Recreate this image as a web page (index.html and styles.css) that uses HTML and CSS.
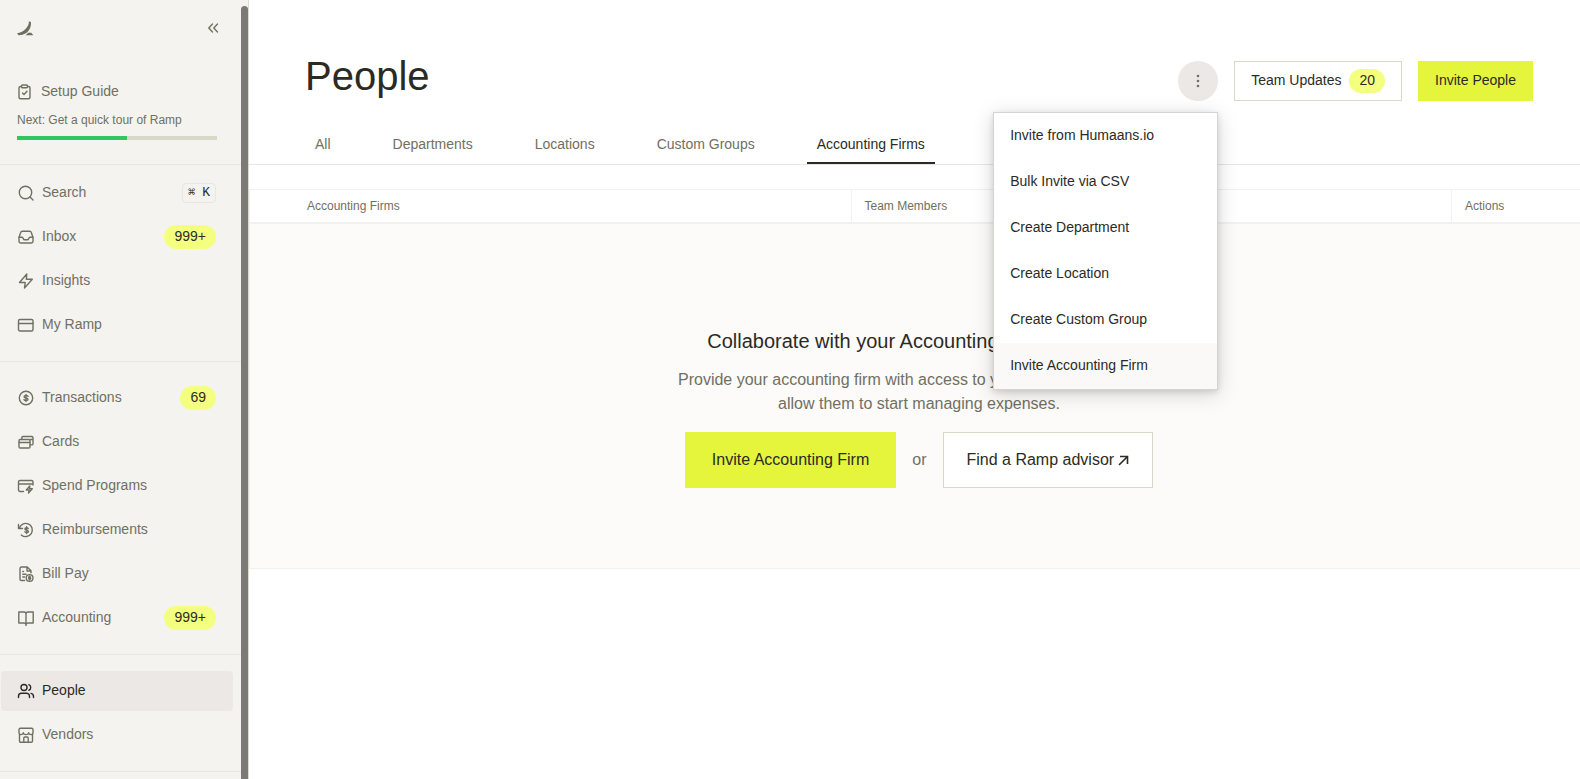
FILE: index.html
```html
<!DOCTYPE html>
<html lang="en">
<head>
<meta charset="utf-8">
<title>People</title>
<link rel="stylesheet" href="styles.css">
</head>
<body>
<div class="app">
  <aside class="sidebar">
    <div class="sidebar-content">
      <div class="brand">
        <a class="logo" href="#" aria-label="Home">
          <svg width="17" height="15" viewBox="0 0 17 15" fill="currentColor"><path d="M11.900.3L13.900.9C14.600 6 11.800 11 7.300 13.100 5 14.200 2.800 14.400 1.600 14.200L0 12.200C3 12 6 10.500 8.500 8 11 5.500 12 3 11.900.3z"/><path d="M7.800 14.300C9.300 13.800 10.400 12.900 11 11.700h3.300l2 2.600z"/></svg>
        </a>
        <button class="collapse" type="button" aria-label="Collapse sidebar">
          <svg width="12" height="12" viewBox="0 0 12 12" class="line"><path d="M5.500 2L1.800 6l3.700 4M10.500 2L6.800 6l3.700 4"/></svg>
        </button>
      </div>
      <a class="setup" href="#">
        <span class="setup-title">
          <svg width="16" height="16" viewBox="0 0 16 16" class="line"><path d="M4.500 2.500H3.500a1.500 1.500 0 0 0-1.500 1.500v9.300A1.500 1.500 0 0 0 3.500 14.800h8a1.500 1.500 0 0 0 1.500-1.500V4a1.500 1.500 0 0 0-1.500-1.500h-1"/><rect x="4.500" y="1" width="6" height="2.800" rx="1"/><path d="M5.500 9l1.500 1.500 3-3.200"/></svg>
          Setup Guide
        </span>
        <span class="setup-next">Next: Get a quick tour of Ramp</span>
        <span class="progress"><span class="progress-fill" style="width:55%"></span></span>
      </a>
      <nav class="group group-first">
        <a class="item" href="#">
          <svg width="18" height="18" viewBox="0 0 18 18" class="line"><circle cx="8.500" cy="8.500" r="6.200"/><path d="M13 13l3 3"/></svg>
          <span class="label">Search</span><kbd class="keys"><span class="cmd">⌘</span>K</kbd>
        </a>
        <a class="item" href="#">
          <svg width="18" height="18" viewBox="0 0 18 18" class="line"><path d="M2 9.500l1.600-4.800A2 2 0 0 1 5.500 3.200h7a2 2 0 0 1 1.900 1.500L16 9.500v3.700a1.800 1.800 0 0 1-1.800 1.800H3.800A1.800 1.800 0 0 1 2 13.200z"/><path d="M2 9.200h3.200c1 0 1 2.600 2.300 2.600h3c1.300 0 1.300-2.600 2.300-2.600H16"/></svg>
          <span class="label">Inbox</span><span class="badge">999+</span>
        </a>
        <a class="item" href="#">
          <svg width="18" height="18" viewBox="0 0 18 18" class="line"><path d="M9.800 2L2.500 10.500h5.700L7.500 16l7.800-8.700H9.300z"/></svg>
          <span class="label">Insights</span>
        </a>
        <a class="item" href="#">
          <svg width="18" height="18" viewBox="0 0 18 18" class="line"><rect x="1.500" y="3.500" width="14.500" height="11.500" rx="1.500"/><path d="M1.500 7.500H16"/></svg>
          <span class="label">My Ramp</span>
        </a>
      </nav>
      <nav class="group">
        <a class="item" href="#">
          <svg width="18" height="18" viewBox="0 0 18 18" class="line"><circle cx="9" cy="9" r="6.700"/><path d="M11 7.300C10.600 6.600 9.900 6.400 9 6.400c-1.200 0-1.900.5-1.900 1.300C7.100 9.500 11 8.500 11 10.300c0 .8-.8 1.300-2 1.300-.9 0-1.700-.3-2-1M9 5.400v7.200"/></svg>
          <span class="label">Transactions</span><span class="badge">69</span>
        </a>
        <a class="item" href="#">
          <svg width="18" height="18" viewBox="0 0 18 18" class="line"><rect x="2" y="6.500" width="11" height="8.500" rx="1.200"/><path d="M2 9.500h11M4.800 6V4.700a1.200 1.200 0 0 1 1.200-1.200h8.800A1.200 1.200 0 0 1 16 4.700v6a1.200 1.200 0 0 1-1.200 1.200h-1.500M13.500 6.500H16"/></svg>
          <span class="label">Cards</span>
        </a>
        <a class="item" href="#">
          <svg width="18" height="18" viewBox="0 0 18 18" class="line"><path d="M6.500 14.500H3A1.500 1.500 0 0 1 1.500 13V5A1.500 1.500 0 0 1 3 3.500h11.500A1.500 1.500 0 0 1 16 5v3M1.500 7H16M12.800 9l-3.500 4h2.700l-.5 3 3.800-4.200h-2.700z"/></svg>
          <span class="label">Spend Programs</span>
        </a>
        <a class="item" href="#">
          <svg width="18" height="18" viewBox="0 0 18 18" class="line"><path d="M1.500 3.500v4h4M2.300 7.300A6.600 6.600 0 1 1 4.300 13.900"/><path d="M11.200 7.600c-.3-.6-.9-.8-1.600-.8-1.100 0-1.700.4-1.700 1.200 0 1.600 3.500.8 3.500 2.400 0 .7-.7 1.200-1.700 1.200-.8 0-1.500-.3-1.800-.9M9.600 5.700v6.900"/></svg>
          <span class="label">Reimbursements</span>
        </a>
        <a class="item" href="#">
          <svg width="18" height="18" viewBox="0 0 18 18" class="line"><path d="M7.500 15.500H4.300A1.300 1.300 0 0 1 3 14.200V3.300A1.300 1.300 0 0 1 4.300 2h5.900l3.800 3.800v2M10 2v4h4M5.800 6.500h.7M5.800 9.300H9M5.800 12H7.500"/><circle cx="12.600" cy="13" r="3.400"/><path d="M13.600 12c-.6-.5-2-.4-2 .3 0 .8 2.100.4 2.100 1.300 0 .7-1.600.8-2.200.2M12.600 11v4"/></svg>
          <span class="label">Bill Pay</span>
        </a>
        <a class="item" href="#">
          <svg width="18" height="18" viewBox="0 0 18 18" class="line"><path d="M9 5a2 2 0 0 0-2-2H1.800v11H7a2 2 0 0 1 2 1.500A2 2 0 0 1 11 14h5.200V3H11a2 2 0 0 0-2 2zM9 5v11.500"/></svg>
          <span class="label">Accounting</span><span class="badge">999+</span>
        </a>
      </nav>
      <nav class="group">
        <a class="item item-active" href="#" aria-current="page">
          <svg width="18" height="18" viewBox="0 0 18 18" class="line"><circle cx="7" cy="5.500" r="3"/><path d="M1.500 15.500v-1.300a3 3 0 0 1 3-3h5a3 3 0 0 1 3 3v1.300M11.800 2.700a3 3 0 0 1 0 5.600M14 11.400a3 3 0 0 1 2.500 3v1.100"/></svg>
          <span class="label">People</span>
        </a>
        <a class="item" href="#">
          <svg width="18" height="18" viewBox="0 0 18 18" class="line"><path d="M3.300 2.300h11.400a1.300 1.300 0 0 1 1.300 1.300v3.200a1.800 1.800 0 0 1-1.800 1.800c-1.400 0-2.300-.7-2.500-1.800-.2 1.100-1.300 1.800-2.700 1.800s-2.500-.7-2.700-1.800c-.2 1.100-1.100 1.800-2.500 1.800A1.800 1.800 0 0 1 2 6.800V3.600a1.300 1.300 0 0 1 1.300-1.300zM2.500 8.500V15A1.300 1.300 0 0 0 3.800 16.300h10.400a1.300 1.300 0 0 0 1.300-1.300V8.500M6.800 16v-4a1 1 0 0 1 1-1h2.400a1 1 0 0 1 1 1v4"/></svg>
          <span class="label">Vendors</span>
        </a>
      </nav>
      <nav class="group"></nav>
    </div>
    <div class="scroll-track"><div class="scroll-thumb"></div></div>
  </aside>

  <main class="main">
    <header class="page-header">
      <h1 class="title">People</h1>
      <div class="actions">
        <div class="menu-anchor">
          <button class="more" type="button" aria-label="More actions" aria-expanded="true">
            <svg width="4" height="14" viewBox="0 0 4 14" fill="currentColor"><circle cx="2" cy="2" r="1.300"/><circle cx="2" cy="7" r="1.300"/><circle cx="2" cy="12" r="1.300"/></svg>
          </button>
          <div class="menu" role="menu">
            <button class="menu-item" type="button" role="menuitem">Invite from Humaans.io</button>
            <button class="menu-item" type="button" role="menuitem">Bulk Invite via CSV</button>
            <button class="menu-item" type="button" role="menuitem">Create Department</button>
            <button class="menu-item" type="button" role="menuitem">Create Location</button>
            <button class="menu-item" type="button" role="menuitem">Create Custom Group</button>
            <button class="menu-item menu-item-hover" type="button" role="menuitem">Invite Accounting Firm</button>
          </div>
        </div>
        <button class="btn btn-outline" type="button"><span class="btn-text">Team Updates</span><span class="badge">20</span></button>
        <button class="btn btn-primary" type="button"><span class="btn-text">Invite People</span></button>
      </div>
    </header>
    <nav class="tabs">
      <a class="tab" href="#">All</a>
      <a class="tab" href="#">Departments</a>
      <a class="tab" href="#">Locations</a>
      <a class="tab" href="#">Custom Groups</a>
      <a class="tab tab-active" href="#" aria-current="page">Accounting Firms</a>
    </nav>
    <table class="table">
      <thead>
        <tr>
          <th scope="col">Accounting Firms</th>
          <th scope="col">Team Members</th>
          <th scope="col" class="col-actions">Actions</th>
        </tr>
      </thead>
      <tbody>
        <tr>
          <td class="empty" colspan="3">
            <h2 class="empty-title">Collaborate with your Accounting Firm on Ramp</h2>
            <p class="empty-text">Provide your accounting firm with access to your Ramp account and allow them to start managing expenses.</p>
            <div class="empty-actions">
              <button class="btn btn-large btn-primary" type="button">Invite Accounting Firm</button>
              <span>or</span>
              <a class="btn btn-large btn-outline" href="#">Find a Ramp advisor
                <svg width="11" height="11" viewBox="0 0 11 11" class="arrow"><path d="M1 10L9.500 1.500M2 1.500h7.500V9"/></svg>
              </a>
            </div>
          </td>
        </tr>
      </tbody>
    </table>
  </main>
</div>
</body>
</html>
```
FILE: styles.css
```css
:root {
  --ink: #2b2b24;
  --muted: #707062;
  --sand: #f4f3ef;
  --hush: #fcfbfa;
  --hover: #ece8e5;
  --line: #e8e6e3;
  --line-soft: #f2f1ee;
  --border: #d8d8c9;
  --lime: #e4f53c;
  --lime-soft: #f4ff80;
  --green: #35c460;
}

* { box-sizing: border-box; }

body {
  margin: 0;
  font-family: "Liberation Sans", Arial, sans-serif;
  font-size: 14px;
  line-height: 20px;
  color: var(--ink);
  background: #fff;
}

a { color: inherit; text-decoration: none; }

button {
  font: inherit;
  color: inherit;
  border: 0;
  background: none;
  padding: 0;
}

svg { flex: none; }

.line {
  fill: none;
  stroke: currentColor;
  stroke-width: 1.4;
  stroke-linecap: round;
  stroke-linejoin: round;
}

.app { display: flex; height: 100vh; overflow: hidden; }

/* Sidebar */
.sidebar {
  display: flex;
  flex: none;
  width: 249px;
  background: var(--sand);
  border-right: 1px solid #dcdbcf;
  color: var(--muted);
}

.sidebar-content { flex: 1; overflow: hidden; }

.scroll-track { display: flex; width: 7px; padding-top: 6px; }
.scroll-thumb { flex: 1; background: #7b7a77; border-radius: 4px 4px 0 0; }

.brand {
  display: flex;
  align-items: center;
  justify-content: space-between;
  padding: 16px 22px 0 17px;
  height: 40px;
}

.logo, .collapse { display: flex; }
.collapse { color: inherit; }

.setup {
  display: flex;
  flex-direction: column;
  padding: 41px 24px 24px 17px;
}

.setup-title { display: flex; align-items: center; gap: 8px; padding-bottom: 8px; line-height: 21px; }
.setup-next { font-size: 12px; padding-bottom: 6px; }
.progress { height: 4px; background: var(--border); }
.progress-fill { display: block; height: 100%; background: var(--green); }

.group {
  display: flex;
  flex-direction: column;
  gap: 4px;
  border-top: 1px solid var(--line);
  padding: 16px 8px 16px 1px;
}

.group-first { padding-top: 8px; }

.item {
  display: flex;
  align-items: center;
  gap: 7px;
  height: 40px;
  padding: 0 17px 0 16px;
  border-radius: 4px;
}

.label { flex: 1; padding-bottom: 2px; }
.item-active { background: var(--hover); color: var(--ink); }

.badge {
  display: inline-block;
  padding: 0 10px 2px;
  border-radius: 12px;
  background: var(--lime-soft);
  color: var(--ink);
  line-height: 22px;
}

.keys {
  display: flex;
  align-items: center;
  gap: 7px;
  height: 20px;
  padding: 0 5px;
  border: 1px solid var(--line);
  border-radius: 4px;
  color: var(--ink);
  font-family: "Liberation Mono", "DejaVu Sans Mono", monospace;
  font-size: 13px;
}

.cmd { font-size: 12px; }

/* Page */
.main { flex: 1; min-width: 0; }

.page-header {
  display: flex;
  align-items: flex-start;
  justify-content: space-between;
  padding: 61px 47px 0 56px;
}

.title { margin: 0; font-size: 40px; font-weight: 400; line-height: 30px; }
.actions { display: flex; gap: 16px; }
.menu-anchor { position: relative; }

.more {
  display: flex;
  align-items: center;
  justify-content: center;
  width: 40px;
  height: 40px;
  border-radius: 50%;
  background: var(--hover);
  color: var(--muted);
}

.btn {
  display: inline-flex;
  align-items: center;
  gap: 8px;
  height: 40px;
  padding: 0 17px;
  white-space: nowrap;
  color: var(--ink);
}

.btn-text { padding-bottom: 2px; }
.btn-outline { padding: 0 16px; background: #fff; border: 1px solid var(--border); }
.btn-primary { background: var(--lime); }
.btn-large { height: 56px; padding: 0 27px; font-size: 16px; gap: 4px; }
.btn-large.btn-outline { padding: 0 23px; }

.menu {
  position: absolute;
  top: 51px;
  right: 0;
  z-index: 1;
  width: 225px;
  background: #fff;
  border: 1px solid #d5d4d0;
  box-shadow: 0 4px 20px rgba(0, 0, 0, 0.16), 0 2px 6px rgba(0, 0, 0, 0.12);
}

.menu-item {
  display: block;
  width: 100%;
  height: 46px;
  padding: 0 16px 2px;
  text-align: left;
}

.menu-item-hover { background: #faf9f8; }

.tabs {
  display: flex;
  gap: 42px;
  margin-top: 23px;
  padding: 0 56px;
  border-bottom: 1px solid var(--line);
  color: var(--muted);
}

.tab { padding: 0 10px; line-height: 40px; }
.tab-active { color: var(--ink); box-shadow: inset 0 -2px var(--ink); }

.table {
  width: 100%;
  margin-top: 24px;
  border-spacing: 0;
  border-top: 1px solid var(--line-soft);
  border-left: 1px solid var(--line-soft);
  table-layout: fixed;
}

.table th {
  height: 34px;
  padding: 0 13px;
  border-bottom: 2px solid var(--line-soft);
  border-left: 1px solid var(--line-soft);
  color: var(--muted);
  font-size: 12px;
  font-weight: 400;
  text-align: left;
}

.table th:first-child { padding-left: 57px; border-left: 0; }
.table .col-actions { width: 129px; }

.empty {
  padding: 105px 0 80px 8px;
  background: var(--hush);
  border-bottom: 1px solid var(--line-soft);
  color: var(--muted);
  font-size: 16px;
  line-height: 24px;
  text-align: center;
}

.empty-title { margin: 0 0 15px; color: var(--ink); font-size: 20px; font-weight: 400; }
.empty-text { max-width: 500px; margin: 0 auto 16px; }

.empty-actions {
  display: flex;
  align-items: center;
  justify-content: center;
  gap: 16px;
}

.arrow { fill: none; stroke: currentColor; stroke-width: 1.6; }
```
